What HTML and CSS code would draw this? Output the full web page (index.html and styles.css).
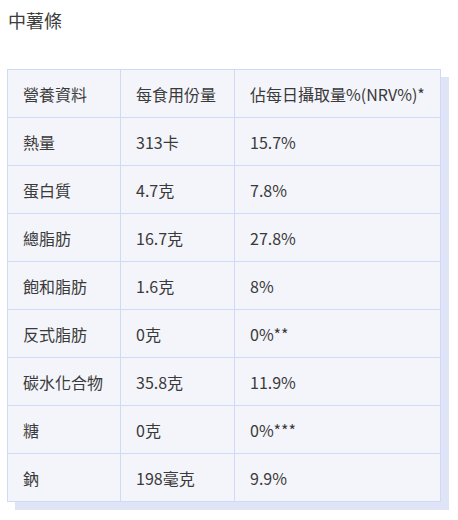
FILE: index.html
```html
<!DOCTYPE html>
<html lang="zh-Hant">
<head>
<meta charset="utf-8">
<link rel="stylesheet" href="styles.css">
</head>
<body>
<h3 class="title">中薯條</h3>
<table class="nutri">
  <colgroup><col class="c1"><col class="c2"><col class="c3"></colgroup>
  <thead>
    <tr><th>營養資料</th><th>每食用份量</th><th>佔每日攝取量%(NRV%)*</th></tr>
  </thead>
  <tbody>
    <tr><td>熱量</td><td>313卡</td><td>15.7%</td></tr>
    <tr><td>蛋白質</td><td>4.7克</td><td>7.8%</td></tr>
    <tr><td>總脂肪</td><td>16.7克</td><td>27.8%</td></tr>
    <tr><td>飽和脂肪</td><td>1.6克</td><td>8%</td></tr>
    <tr><td>反式脂肪</td><td>0克</td><td>0%**</td></tr>
    <tr><td>碳水化合物</td><td>35.8克</td><td>11.9%</td></tr>
    <tr><td>糖</td><td>0克</td><td>0%***</td></tr>
    <tr><td>鈉</td><td>198毫克</td><td>9.9%</td></tr>
  </tbody>
</table>
</body>
</html>
```
FILE: styles.css
```css
body {
  margin: 0;
  padding: 8px 8px;
  background: #ffffff;
  font-family: "Noto Sans CJK TC", sans-serif;
  color: #333333;
}
.title {
  margin: 0;
  font-size: 18px;
  font-weight: 400;
  line-height: 24px;
  color: #3c3c3c;
}
.nutri {
  margin: 37px 0 0 -1px;
  width: 433px;
  border-collapse: collapse;
  table-layout: fixed;
  background: #f4f5fb;
  box-shadow: 8px 8px 0 #dfe5f7;
  font-size: 16px;
}
.c1 { width: 113px; }
.c2 { width: 114px; }
.c3 { width: 206px; }
.nutri th,
.nutri td {
  border: 1px solid #cfdaf7;
  height: 47px;
  padding: 0 0 0 15px;
  text-align: left;
  font-weight: 400;
  vertical-align: middle;
  white-space: nowrap;
  color: #3a3a3a;
  line-height: 20px;
}
```
